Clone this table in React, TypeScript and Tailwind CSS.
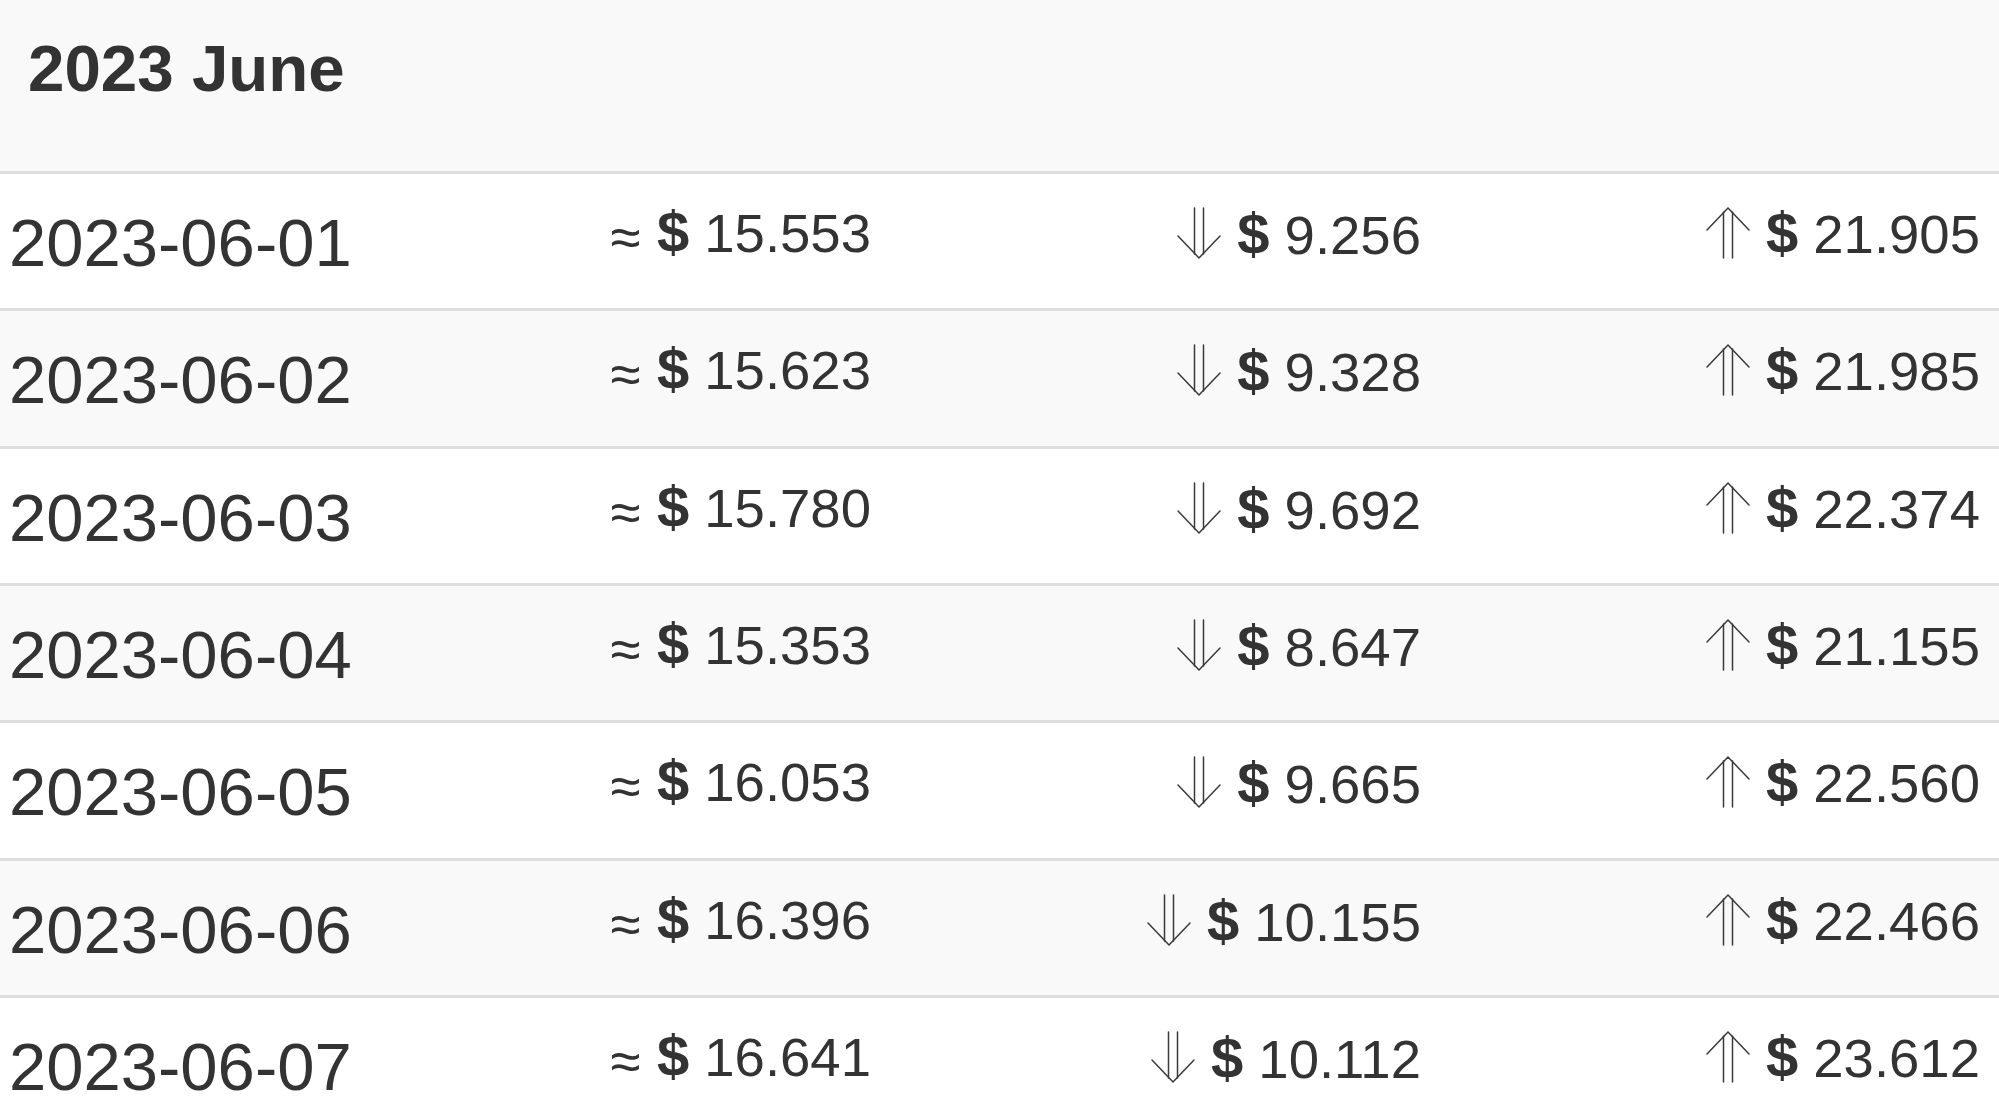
import React from "react";

const rows = [
  { date: "2023-06-01", avg: "15.553", low: "9.256", high: "21.905" },
  { date: "2023-06-02", avg: "15.623", low: "9.328", high: "21.985" },
  { date: "2023-06-03", avg: "15.780", low: "9.692", high: "22.374" },
  { date: "2023-06-04", avg: "15.353", low: "8.647", high: "21.155" },
  { date: "2023-06-05", avg: "16.053", low: "9.665", high: "22.560" },
  { date: "2023-06-06", avg: "16.396", low: "10.155", high: "22.466" },
  { date: "2023-06-07", avg: "16.641", low: "10.112", high: "23.612" },
];

function DownArrow() {
  return (
    <svg
      width="44"
      height="52"
      viewBox="0 0 44 52"
      className="inline-block align-[-5px] mr-[16px]"
      fill="none"
      stroke="#3a3a3a"
      strokeWidth="1.5"
      strokeLinecap="round"
      strokeLinejoin="round"
    >
      <line x1="17.5" y1="1" x2="17.5" y2="47" />
      <line x1="26.5" y1="1" x2="26.5" y2="47" />
      <polyline points="1,29 22,51 43,29" />
    </svg>
  );
}

function UpArrow() {
  return (
    <svg
      width="44"
      height="52"
      viewBox="0 0 44 52"
      className="inline-block align-[-6px] mr-[16px]"
      fill="none"
      stroke="#3a3a3a"
      strokeWidth="1.5"
      strokeLinecap="round"
      strokeLinejoin="round"
    >
      <line x1="17.5" y1="5" x2="17.5" y2="51" />
      <line x1="26.5" y1="5" x2="26.5" y2="51" />
      <polyline points="1,23 22,1 43,23" />
    </svg>
  );
}

function Dollar() {
  return <span className="font-bold text-[58px] leading-[0px]">$</span>;
}

export default function App() {
  return (
    <div
      className="w-[1999px] h-[1120px] overflow-hidden bg-white text-[#333]"
      style={{ fontFamily: '"Liberation Sans", Arial, Helvetica, sans-serif' }}
    >
      <div className="h-[174px] bg-[#f9f9f9] border-b-[3px] border-[#dedede] pl-[28px] pt-[36px]">
        <h2 className="text-[65.5px] font-bold leading-none">2023 June</h2>
      </div>
      {rows.map((r, i) => (
        <div
          key={r.date}
          className={
            "grid grid-cols-[400px_471px_550px_1fr] pr-[19px] h-[137.33px] border-b-[3px] border-[#dedede] " +
            (i % 2 === 1 ? "bg-[#f9f9f9]" : "bg-white")
          }
        >
          <div className="pl-[9px] pt-[35px] text-[67px] leading-none whitespace-nowrap">{r.date}</div>
          <div className="pt-[33px] text-right text-[54.5px] leading-none whitespace-nowrap">
            <span className="mr-[1px] align-[-4px] leading-[0px]">≈</span>
            <span> </span>
            <Dollar />
            <span> {r.avg}</span>
          </div>
          <div className="pt-[33px] text-right text-[54.5px] leading-none whitespace-nowrap">
            <DownArrow />
            <Dollar />
            <span> {r.low}</span>
          </div>
          <div className="pt-[33px] text-right text-[54.5px] leading-none whitespace-nowrap">
            <UpArrow />
            <Dollar />
            <span> {r.high}</span>
          </div>
        </div>
      ))}
    </div>
  );
}
